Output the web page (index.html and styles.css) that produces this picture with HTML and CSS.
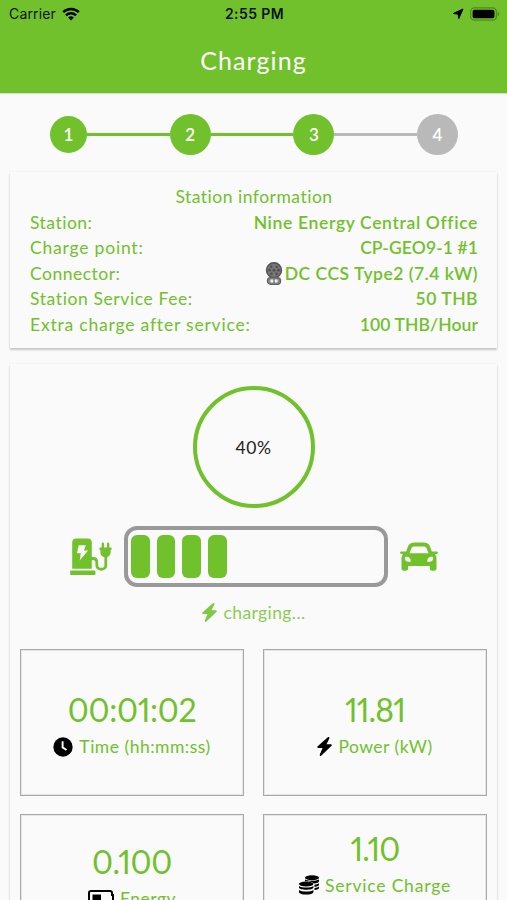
FILE: index.html
```
<!DOCTYPE html>
<html lang="en">
<head>
    <meta charset="UTF-8">
    <meta name="viewport" content="width=device-width, initial-scale=1.0">
    <title>Charging</title>
    <link rel="stylesheet" href="styles.css">
</head>
<body>
    <header class="header">
        <div class="status-bar">
            <div class="carrier">
                <span class="carrier-name">Carrier</span>
                <svg class="wifi" viewBox="0 0 18 14">
                    <path d="M1.2 5.2a11 11 0 0 1 15.6 0" fill="none" stroke="#000" stroke-width="2.5"/>
                    <path d="M4 8.3a7.1 7.1 0 0 1 10 0" fill="none" stroke="#000" stroke-width="2.4"/>
                    <path d="M6.1 10.6a4.1 4.1 0 0 1 5.8 0L9 13.6z"/>
                </svg>
            </div>
            <div class="clock">2:55 PM</div>
            <div class="indicators">
                <svg class="location" viewBox="0 0 12 12"><path d="M11 1 6.8 10.600 6 6 1.200 5.500z" stroke="#000" stroke-width="1" stroke-linejoin="round"/></svg>
                <svg class="phone-battery" viewBox="0 0 31 14">
                    <rect x=".7" y=".7" width="26.6" height="12.6" rx="3.8" fill="none" stroke="#4f8c1c" stroke-width="1.3"/>
                    <rect x="2.7" y="2.5" width="22.6" height="9" rx="1.8"/>
                    <path d="M28.7 4.8c2 .8 2 3.6 0 4.4z" fill="#4f8c1c"/>
                </svg>
            </div>
        </div>
        <h1>Charging</h1>
    </header>

    <div class="stepper">
        <div class="step first">1</div>
        <div class="step-line"></div>
        <div class="step">2</div>
        <div class="step-line"></div>
        <div class="step">3</div>
        <div class="step-line inactive"></div>
        <div class="step inactive">4</div>
    </div>

    <section class="card station">
        <h2>Station information</h2>
        <div class="info-row"><span>Station:</span><b class="name">Nine Energy Central Office</b></div>
        <div class="info-row"><span class="wide">Charge point:</span><b class="point">CP-GEO9-1 #1</b></div>
        <div class="info-row">
            <span>Connector:</span>
            <b class="connector">
                <svg viewBox="0 0 18 23">
                    <circle cx="9" cy="8.2" r="7.5" fill="#777" stroke="#505050" stroke-width="1.4"/>
                    <g fill="#505050">
                        <circle cx="6.3" cy="4.7" r="1.2"/><circle cx="11.7" cy="4.7" r="1.2"/>
                        <circle cx="4.5" cy="8.2" r="1.4"/><circle cx="9" cy="8.2" r="1.4"/><circle cx="13.5" cy="8.2" r="1.4"/>
                        <circle cx="6.5" cy="11.8" r="1.2"/><circle cx="11.5" cy="11.8" r="1.2"/>
                    </g>
                    <rect x="2.4" y="15.6" width="13.2" height="6.7" rx="3.3" fill="#888" stroke="#606060" stroke-width="1.2"/>
                    <circle cx="7" cy="19" r="1.8" fill="#eee"/><circle cx="11" cy="19" r="1.8" fill="#eee"/>
                    <path d="M9 17v4" stroke="#777"/>
                </svg>
                <span>DC CCS Type2 (7.4 kW)</span>
            </b>
        </div>
        <div class="info-row"><span class="fee">Station Service Fee:</span><b>50 THB</b></div>
        <div class="info-row"><span class="wide">Extra charge after service:</span><b class="hourly">100 THB/Hour</b></div>
    </section>

    <section class="card session">
        <div class="percent">40%</div>

        <div class="charge-row">
            <svg class="station-icon" viewBox="0 0 42 38">
                <path fill-rule="evenodd" d="M6.2.5h11.6a4 4 0 0 1 4 4v26.2H2.2V4.5a4 4 0 0 1 4-4zM8.8 7.3 6.8 15.2h4l-1.1 7.3 8.4-10.1h-4.2l2-5.1z"/>
                <rect x=".2" y="32.5" width="25.2" height="4.4" rx=".6"/>
                <path d="M21 20.5h2c2.8 0 3.8 1.5 3.8 4v2.7c0 5.4 9 5.4 9 0V16" fill="none" stroke="#70c12b" stroke-width="2.8"/>
                <path d="M29.5 9.6h12v2.5h-.9v2.3a5.1 5.1 0 0 1-10.2 0v-2.3h-.9zM31.7 5.8a1.2 1.2 0 0 1 2.4 0v4h-2.4zM36.9 5.8a1.2 1.2 0 0 1 2.4 0v4h-2.4z"/>
            </svg>
            <div class="battery">
                <div class="cell"></div>
                <div class="cell"></div>
                <div class="cell"></div>
                <div class="cell"></div>
            </div>
            <svg class="car-icon" viewBox="0 0 38 29">
                <path fill-rule="evenodd" d="M6.2 9.5 8 4.5C9.1 1.5 11.5.5 14.5.5h9c3 0 5.4 1 6.5 4l1.8 5h5c1 0 1.3.6 1 1.300l-.3 1-2.4.4c1 1.500 1.400 3 1.400 5v9.300c0 1.400-.8 2.200-2.200 2.200h-2.200c-1.400 0-2.200-.8-2.200-2.200v-2.600H8.100v2.600c0 1.400-.8 2.200-2.200 2.200H3.700c-1.400 0-2.200-.8-2.200-2.200v-9.300c0-2 .4-3.500 1.400-5l-2.400-.4-.3-1c-.3-.7 0-1.300 1-1.300zM14.500 4.500c-1.700 0-2.600.6-3.200 2L9.500 11.300h19L26.700 6.500c-.6-1.400-1.500-2-3.200-2zM5 15c-.7 3.500 1 5 5.600 4.800.8-2.700-1.600-6-5.600-4.800zM33 15c.7 3.500-1 5-5.600 4.800-.8-2.700 1.600-6 5.600-4.800z"/>
            </svg>
        </div>

        <div class="charging">
            <svg class="bolt" viewBox="0 0 15 19"><path d="M10.8.3c1-.7 2 0 1.500 1.100L9.500 7.300h4.100c1.200 0 1.500 1 .7 1.800L4.400 18.600c-1 .8-2 0-1.600-1L5.600 11H1.300C.2 11-.1 10 .7 9.200z"/></svg>
            <span>charging...</span>
        </div>

        <div class="stats">
            <div class="stat">
                <div class="value">00:01:02</div>
                <div class="label">
                    <svg class="clock-icon" viewBox="0 0 20 20"><circle cx="10" cy="10" r="9.7"/><path d="M9.6 4.200v6.200l3.900 2.600" fill="none" stroke="#fafafa" stroke-width="1.9"/></svg>
                    <span>Time (hh:mm:ss)</span>
                </div>
            </div>
            <div class="stat">
                <div class="value power">11.81</div>
                <div class="label">
                    <svg class="bolt" viewBox="0 0 15 19"><path d="M10.8.3c1-.7 2 0 1.500 1.100L9.500 7.300h4.100c1.200 0 1.500 1 .7 1.800L4.400 18.600c-1 .8-2 0-1.600-1L5.600 11H1.300C.2 11-.1 10 .7 9.200z"/></svg>
                    <span>Power (kW)</span>
                </div>
            </div>
            <div class="stat energy">
                <div class="value">0.100</div>
                <div class="label">
                    <svg class="battery-icon" viewBox="0 0 26 16"><path d="M3 1h19a2 2 0 0 1 2 2v2h1v6h-1v2a2 2 0 0 1-2 2H3a2 2 0 0 1-2-2V3a2 2 0 0 1 2-2z" fill="none" stroke="#000" stroke-width="2"/><path d="M4.500 4.500H13v7H4.500z"/></svg>
                    <span>Energy</span>
                </div>
            </div>
            <div class="stat service">
                <div class="value cost">1.10</div>
                <div class="label">
                    <svg class="coins-icon" viewBox="0 0 20 20">
                        <ellipse cx="13" cy="2.8" rx="7" ry="2.5"/>
                        <path d="M6 4.500c3 1.700 11 1.700 14 0v1.700c0 1-2 2-5 2.300-2-1.700-5-2.300-9-2.100zM15.500 9.800c2-.2 3.500-.8 4.500-1.500v1.500c0 1-1.800 1.800-4.500 2.100zM15.500 13c2-.2 3.500-.8 4.500-1.500V13c0 1-1.800 1.800-4.500 2.100z"/>
                        <ellipse cx="7.2" cy="9" rx="7.2" ry="2.5"/>
                        <path d="M0 11.100c3 2 11.400 2 14.400 0v1.500c0 3-14.400 3-14.400 0zM0 14.900c3 2 11.400 2 14.400 0v2c0 3.500-14.400 3.500-14.400 0z"/>
                    </svg>
                    <span class="wide">Service Charge</span>
                </div>
            </div>
        </div>
    </section>
</body>
</html>
```

FILE: styles.css
```
* {
    box-sizing: border-box;
}

body {
    display: flex;
    flex-direction: column;
    margin: 0;
    height: 900px;
    overflow: hidden;
    background: #fafafa;
    color: #70c12b;
    font-family: Lato, "Liberation Sans", sans-serif;
    font-size: 17.5px;
}

svg {
    display: block;
    flex: none;
}

.header {
    flex: none;
    height: 93px;
    background: #70c12b;
    box-shadow: 0 1px 1px rgba(0, 0, 0, 0.12);
}

.status-bar {
    display: grid;
    grid-template-columns: 1fr 1fr 1fr;
    align-items: center;
    height: 27px;
    padding: 0 7px 0 9px;
    color: #111;
    font-family: Inter, "Liberation Sans", sans-serif;
    font-size: 14px;
}

.carrier {
    display: flex;
    align-items: center;
    gap: 6px;
}

.carrier-name {
    letter-spacing: 0.15px;
}

.wifi {
    width: 18px;
    height: 14px;
}

.clock {
    text-align: center;
    font-weight: 600;
    letter-spacing: 0.4px;
}

.indicators {
    display: flex;
    align-items: center;
    justify-content: flex-end;
    gap: 6px;
}

.location {
    width: 12px;
    height: 12px;
}

.phone-battery {
    width: 30px;
    height: 14px;
}

h1 {
    margin: 0;
    color: #fff;
    text-align: center;
    font-size: 25px;
    font-weight: 400;
    line-height: 66px;
    letter-spacing: 1.1px;
}

.stepper {
    display: flex;
    flex: none;
    align-items: center;
    height: 79px;
    padding: 3px 49px 0 50px;
}

.step {
    display: flex;
    align-items: center;
    justify-content: center;
    width: 41px;
    height: 41px;
    border-radius: 50%;
    background: #70c12b;
    color: #fff;
    font-weight: 600;
    font-size: 17px;
}

.step.first {
    width: 37px;
    height: 37px;
}

.step-line {
    flex: 1;
    height: 3px;
    background: #70c12b;
}

.step.inactive,
.step-line.inactive {
    background: #b9b9b9;
}

.card {
    margin: 0 10px;
    background: #fafafa;
    box-shadow: 0 2px 2px rgba(0, 0, 0, 0.2), 0 0 2px rgba(0, 0, 0, 0.06);
}

.station {
    flex: none;
    height: 176px;
    padding: 12px 19px 0 20px;
    line-height: 25.6px;
}

h2 {
    margin: 0;
    text-align: center;
    font-size: 17.5px;
    font-weight: 400;
    letter-spacing: 0.5px;
}

.info-row {
    display: flex;
    justify-content: space-between;
    letter-spacing: 0.5px;
}

.info-row b {
    font-weight: 600;
}

.info-row .name {
    letter-spacing: 0.65px;
}

.fee {
    letter-spacing: 0.6px;
}

.wide {
    letter-spacing: 0.8px;
}

.point,
.hourly {
    letter-spacing: 0.1px;
}

.connector {
    display: flex;
    align-items: center;
    gap: 2px;
}

.connector svg {
    width: 18px;
    height: 23px;
}

.session {
    flex: 1;
    min-height: 0;
    margin-top: 16px;
    padding: 22px 10px 0;
    overflow: hidden;
}

.percent {
    display: flex;
    align-items: center;
    justify-content: center;
    width: 122px;
    height: 122px;
    margin: 0 auto;
    border: 4px solid #70c12b;
    border-radius: 50%;
    color: #222;
    letter-spacing: 0.6px;
}

.charge-row {
    display: flex;
    align-items: center;
    height: 61px;
    margin-top: 18px;
    padding-left: 50px;
}

.station-icon {
    width: 42px;
    height: 38px;
    fill: #70c12b;
}

.battery {
    display: flex;
    gap: 7px;
    width: 264px;
    height: 61px;
    margin: 0 12px;
    padding: 5px 3px;
    border: 4px solid #999;
    border-radius: 13px;
}

.cell {
    width: 18.7px;
    height: 43px;
    border-radius: 6px;
    background: #70c12b;
}

.car-icon {
    width: 38px;
    height: 29px;
    fill: #70c12b;
}

.charging {
    display: flex;
    align-items: center;
    justify-content: center;
    gap: 7px;
    height: 50px;
    color: #8bcc55;
    letter-spacing: 0.4px;
}

.bolt {
    width: 15px;
    height: 19px;
    fill: #000;
}

.charging .bolt {
    fill: #7fc844;
}

.stats {
    display: grid;
    grid-template-columns: 1fr 1fr;
    grid-auto-rows: 147px;
    gap: 17.5px 19px;
    margin-top: 12px;
}

.stat {
    padding-top: 39px;
    border: 1px solid #a8a8a8;
    box-shadow: inset 0 0 0 1px #e6e6e6;
}

.stat.energy {
    padding-top: 26px;
}

.stat.service {
    padding-top: 13px;
}

.value {
    text-align: center;
    font-size: 32px;
    line-height: 42px;
    letter-spacing: -0.3px;
    font-feature-settings: "pnum";
}

.value.power,
.value.cost {
    letter-spacing: -0.9px;
}

.label {
    display: flex;
    align-items: center;
    justify-content: center;
    gap: 6px;
    height: 31px;
    letter-spacing: 0.5px;
}

.clock-icon,
.coins-icon {
    width: 20px;
    height: 20px;
}

.battery-icon {
    width: 26px;
    height: 16px;
}
```
